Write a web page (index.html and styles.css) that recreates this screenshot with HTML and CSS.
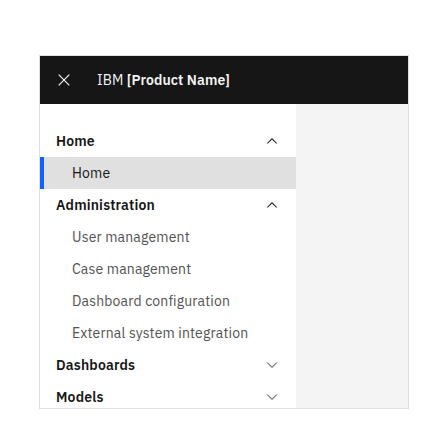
FILE: index.html
```html
<!DOCTYPE html>
<html>
<head>
<meta charset="utf-8">
<link rel="stylesheet" href="styles.css">
</head>
<body>
<div class="frame">
  <header class="header">
    <button class="menu-btn" aria-label="Close menu">
      <svg width="12" height="12" viewBox="0 0 12 12"><path d="M0.7 0.7L11.3 11.3M11.3 0.7L0.7 11.3" stroke="#f4f4f4" stroke-width="1.2" fill="none"/></svg>
    </button>
    <div class="name">IBM <b>[Product Name]</b></div>
  </header>
  <div class="body">
    <nav class="sidenav">
      <ul class="items">
        <li>
          <div class="menu-head"><span>Home</span>
            <svg class="chev up" width="16" height="16" viewBox="0 0 16 16"><path d="M8 5L13 10 12.3 10.7 8 6.4 3.7 10.7 3 10z"/></svg>
          </div>
          <ul class="sub">
            <li class="link current">Home</li>
          </ul>
        </li>
        <li>
          <div class="menu-head"><span>Administration</span>
            <svg class="chev up" width="16" height="16" viewBox="0 0 16 16"><path d="M8 5L13 10 12.3 10.7 8 6.4 3.7 10.7 3 10z"/></svg>
          </div>
          <ul class="sub">
            <li class="link">User management</li>
            <li class="link">Case management</li>
            <li class="link">Dashboard configuration</li>
            <li class="link">External system integration</li>
          </ul>
        </li>
        <li>
          <div class="menu-head"><span>Dashboards</span>
            <svg class="chev down" width="16" height="16" viewBox="0 0 16 16"><path d="M8 11L3 6 3.7 5.3 8 9.6 12.3 5.3 13 6z"/></svg>
          </div>
        </li>
        <li>
          <div class="menu-head"><span>Models</span>
            <svg class="chev down" width="16" height="16" viewBox="0 0 16 16"><path d="M8 11L3 6 3.7 5.3 8 9.6 12.3 5.3 13 6z"/></svg>
          </div>
        </li>
      </ul>
    </nav>
    <main class="content"></main>
  </div>
</div>
</body>
</html>
```
FILE: styles.css
```css
* { box-sizing: border-box; }
html, body { margin: 0; padding: 0; background: #ffffff; }
body {
  font-family: "IBM Plex Sans", "Noto Sans", "Open Sans", sans-serif;
  padding: 55px 0 0 39px;
}
.frame {
  width: 370px;
  height: 354px;
  border: 1px solid #e0e0e0;
  display: flex;
  flex-direction: column;
  overflow: hidden;
}
.header {
  height: 48px;
  background: #161616;
  display: flex;
  align-items: center;
  flex: none;
}
.menu-btn {
  width: 48px;
  height: 48px;
  background: none;
  border: 0;
  padding: 0;
  display: flex;
  align-items: center;
  justify-content: center;
}
.name {
  color: #f4f4f4;
  font-size: 14px;
  padding-left: 9px;
  letter-spacing: 0.1px;
}
.name b { font-weight: 600; }
.body {
  flex: 1;
  display: flex;
  min-height: 0;
}
.sidenav {
  width: 256px;
  background: #ffffff;
  flex: none;
  padding-top: 21px;
}
.content {
  flex: 1;
  background: #f4f4f4;
}
ul { list-style: none; margin: 0; padding: 0; }
.menu-head {
  height: 32px;
  display: flex;
  align-items: center;
  justify-content: space-between;
  padding: 0 16px;
  font-size: 14px;
  font-weight: 600;
  color: #161616;
  letter-spacing: 0.16px;
}
.chev { fill: #161616; }
.chev.down { fill: #6f6f6f; }
.link {
  height: 32px;
  display: flex;
  align-items: center;
  padding-left: 32px;
  font-size: 14px;
  color: #525252;
  letter-spacing: 0.16px;
  position: relative;
}
.link.current {
  background: #e0e0e0;
  color: #161616;
}
.link.current::before {
  content: "";
  position: absolute;
  left: 0;
  top: 0;
  bottom: 0;
  width: 4px;
  background: #0f62fe;
}
```
